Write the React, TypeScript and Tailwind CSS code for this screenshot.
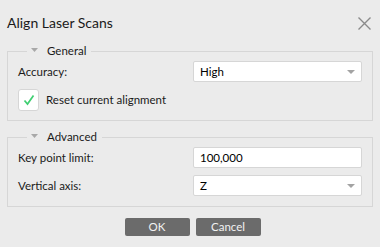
import React from "react";

const font = { fontFamily: 'Lato, "Noto Sans", sans-serif' };

function Arrow() {
  return (
    <svg width="8" height="4" viewBox="0 0 8 4" className="shrink-0">
      <path d="M0 0 H8 L4 4 Z" fill="#a3a3a3" />
    </svg>
  );
}

function Legend({ text }: { text: string }) {
  return (
    <legend className="ml-[9px] pl-[4px] pr-[5px] flex items-center leading-[14px] h-[14px]">
      <svg width="7" height="4" viewBox="0 0 7 4" className="mr-[9px] -mt-[3px]">
        <path d="M0 0 H7 L3.5 4 Z" fill="#a8a8a8" />
      </svg>
      <span className="text-[11.5px] text-[#1a1a1a]">{text}</span>
    </legend>
  );
}

function Combo({ value }: { value: string }) {
  return (
    <div className="w-[169px] h-[21px] bg-white border border-[#d6d6d6] rounded-[2px] flex items-center justify-between pl-[6px] pr-[6px]">
      <span className="text-[11.5px] text-black">{value}</span>
      <Arrow />
    </div>
  );
}

function Input({ value }: { value: string }) {
  return (
    <div className="w-[169px] h-[21px] bg-white border border-[#d6d6d6] rounded-[2px] flex items-center pl-[6px]">
      <span className="text-[11.5px] text-black">{value}</span>
    </div>
  );
}

export default function App() {
  return (
    <div className="w-[380px] h-[247px] bg-[#ebebeb] flex flex-col overflow-hidden" style={font}>
      <div className="flex justify-between pl-[7px] pr-[9px] pt-[13px] h-[44px] items-start">
        <span className="text-[14px] leading-[20px] text-[#1a1a1a]">Align Laser Scans</span>
        <svg width="13" height="13" viewBox="0 0 13 13" className="mt-[4px]">
          <path d="M0.5 0.5 L12.5 12.5 M12.5 0.5 L0.5 12.5" stroke="#8a8a8a" strokeWidth="1.4" />
        </svg>
      </div>
      <fieldset className="mx-[7px] border border-[#d6d6d6] px-[10px] pt-[3px] pb-[9px] flex flex-col gap-[7px]">
        <Legend text="General" />
        <div className="flex items-center justify-between">
          <span className="text-[11.5px] text-[#1a1a1a]">Accuracy:</span>
          <Combo value="High" />
        </div>
        <div className="flex items-center gap-[7px]">
          <div className="w-[21px] h-[22px] bg-white border border-[#d6d6d6] rounded-[3px] flex items-center justify-center">
            <svg width="12" height="12" viewBox="0 0 12 12">
              <path d="M1.5 6.5 L4.5 10 L10.5 1.5" stroke="#3fcf72" strokeWidth="1.7" fill="none" />
            </svg>
          </div>
          <span className="text-[11.5px] text-[#1a1a1a]">Reset current alignment</span>
        </div>
      </fieldset>
      <fieldset className="mx-[7px] mt-[9px] border border-[#d6d6d6] px-[10px] pt-[3px] pb-[10px] flex flex-col gap-[7px]">
        <Legend text="Advanced" />
        <div className="flex items-center justify-between">
          <span className="text-[11.5px] text-[#1a1a1a]">Key point limit:</span>
          <Input value="100,000" />
        </div>
        <div className="flex items-center justify-between">
          <span className="text-[11.5px] text-[#1a1a1a]">Vertical axis:</span>
          <Combo value="Z" />
        </div>
      </fieldset>
      <div className="flex justify-center gap-[6px] mt-[11px] pl-[5px]">
        <button className="w-[65px] h-[18px] bg-[#6b6b6b] rounded-[2px] text-[11.5px] leading-[18px] text-[#f2f2f2]">OK</button>
        <button className="w-[65px] h-[18px] bg-[#6b6b6b] rounded-[2px] text-[11.5px] leading-[18px] text-[#f2f2f2]">Cancel</button>
      </div>
    </div>
  );
}
